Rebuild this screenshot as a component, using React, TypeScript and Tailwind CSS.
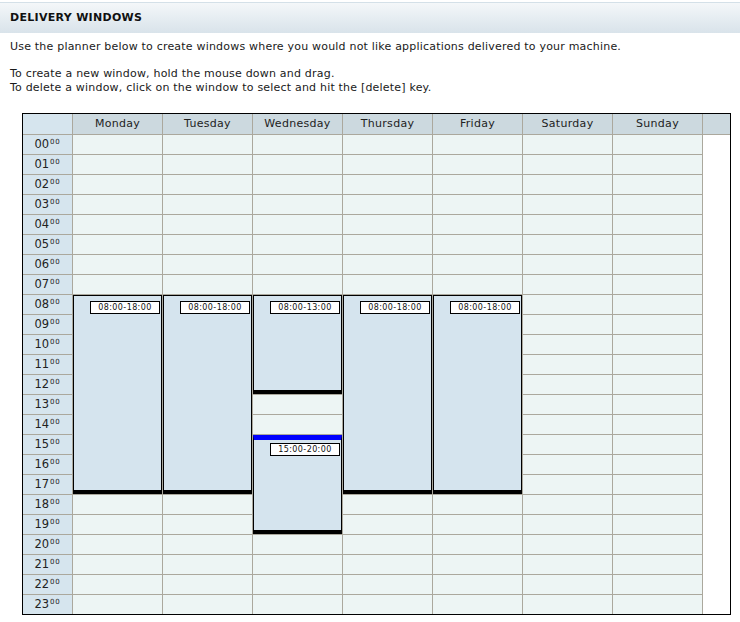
import React from "react";

const days = ["Monday", "Tuesday", "Wednesday", "Thursday", "Friday", "Saturday", "Sunday"];
const hours = Array.from({ length: 24 }, (_, i) => String(i).padStart(2, "0"));

type Win = { day: number; start: number; end: number; selected?: boolean };
const windows: Win[] = [
  { day: 0, start: 8, end: 18 },
  { day: 1, start: 8, end: 18 },
  { day: 2, start: 8, end: 13 },
  { day: 2, start: 15, end: 20, selected: true },
  { day: 3, start: 8, end: 18 },
  { day: 4, start: 8, end: 18 },
];

const fmt = (h: number) => `${String(h).padStart(2, "0")}:00`;

export default function App() {
  return (
    <div className="w-[740px] h-[622px] bg-white font-['DejaVu_Sans',sans-serif] text-[11px] text-[#1a1a1a] overflow-hidden">
      <div className="mt-[2px] h-[31px] border-t border-[#d4e0e8] bg-linear-to-b from-[#f4f7f9] via-[#e6edf2] to-[#d9e3ea] flex items-center pl-[10px] font-bold tracking-[0.3px] text-[#111]">
        DELIVERY WINDOWS
      </div>
      <div className="pl-[10px] pt-[7px] leading-[13.5px] tracking-[0.2px]">
        <div>Use the planner below to create windows where you would not like applications delivered to your machine.</div>
        <div className="h-[13.5px]" />
        <div>To create a new window, hold the mouse down and drag.</div>
        <div>To delete a window, click on the window to select and hit the [delete] key.</div>
      </div>
      <div className="ml-[22px] mt-[19px] w-[709px] border border-black">
        <div className="grid grid-cols-[49px_repeat(7,89px)_27px] grid-rows-[20px_repeat(24,19px)] gap-px bg-[#aba89d]">
          <div className="bg-[#d6e5ee]" style={{ gridColumn: "1", gridRow: "1" }} />
          {days.map((d, c) => (
            <div
              key={d}
              style={{ gridColumn: `${c + 2}`, gridRow: "1" }}
              className="bg-[#ccd9df] flex items-center justify-center text-[#222] tracking-[0.3px]"
            >
              {d}
            </div>
          ))}
          <div className="bg-[#ccd9df]" style={{ gridColumn: "9", gridRow: "1" }} />
          <div className="bg-white" style={{ gridColumn: "9", gridRow: "2 / 26" }} />
          {hours.map((h, r) => (
            <React.Fragment key={h}>
              <div
                style={{ gridColumn: "1", gridRow: `${r + 2}` }}
                className="bg-[#d6e5ee] flex items-center justify-center text-[11.5px] text-[#222]"
              >
                <span>{h}</span>
                <span className="text-[7px] leading-none self-start mt-[4px] ml-[1px] tracking-[0.8px]">00</span>
              </div>
              {days.map((d, c) => (
                <div key={d} style={{ gridColumn: `${c + 2}`, gridRow: `${r + 2}` }} className="bg-[#edf5f4]" />
              ))}
            </React.Fragment>
          ))}
          {windows.map((w, i) => (
            <div
              key={i}
              style={{ gridColumn: `${w.day + 2}`, gridRow: `${w.start + 2} / ${w.end + 2}` }}
              className={
                "bg-[#d5e4ee] border border-black border-b-4 flex justify-end items-start pr-[1px] " +
                (w.selected ? "border-t-[5px] border-t-[#0000ff] pt-[3px]" : "pt-[5px]")
              }
            >
              <div className="w-[70px] h-[13px] border border-black bg-white text-[8px] leading-[11px] text-center tracking-[0.4px] text-[#111]">
                {fmt(w.start)}-{fmt(w.end)}
              </div>
            </div>
          ))}
        </div>
      </div>
    </div>
  );
}
